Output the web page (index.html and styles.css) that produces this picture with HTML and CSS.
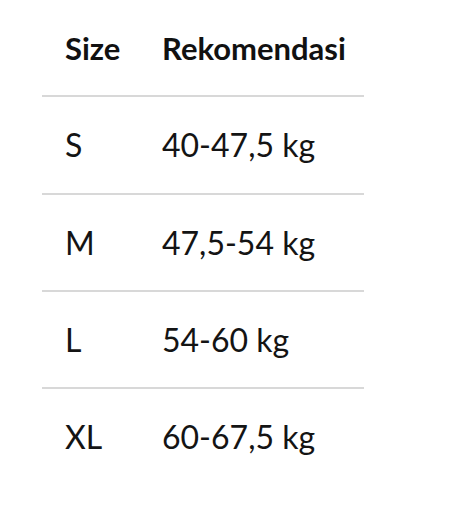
FILE: index.html
```html
<!DOCTYPE html>
<html lang="id">
<head>
<meta charset="utf-8">
<title>Size</title>
<link rel="stylesheet" href="styles.css">
</head>
<body>
<div class="table">
  <div class="row head">
    <div class="size">Size</div>
    <div class="rec">Rekomendasi</div>
  </div>
  <div class="row">
    <div class="size">S</div>
    <div class="rec">40-47,5 kg</div>
  </div>
  <div class="row">
    <div class="size">M</div>
    <div class="rec">47,5-54 kg</div>
  </div>
  <div class="row">
    <div class="size">L</div>
    <div class="rec">54-60 kg</div>
  </div>
  <div class="row last">
    <div class="size">XL</div>
    <div class="rec">60-67,5 kg</div>
  </div>
</div>
</body>
</html>
```
FILE: styles.css
```css
html, body {
  margin: 0;
  padding: 0;
  background: #ffffff;
}
body {
  font-family: Lato, "Open Sans", sans-serif;
  color: #141414;
}
.table {
  margin-left: 42px;
  width: 322px;
}
.row {
  display: flex;
  align-items: center;
  height: 95.33px;
  border-bottom: 2px solid #d8d8d8;
  font-size: 32px;
  padding-left: 23px;
}
.row.last {
  border-bottom: none;
}
.row.head {
  font-weight: 700;
  font-size: 31px;
  color: #111111;
}
.size {
  width: 97px;
  flex: none;
}
.rec {
  flex: 1;
}
```
